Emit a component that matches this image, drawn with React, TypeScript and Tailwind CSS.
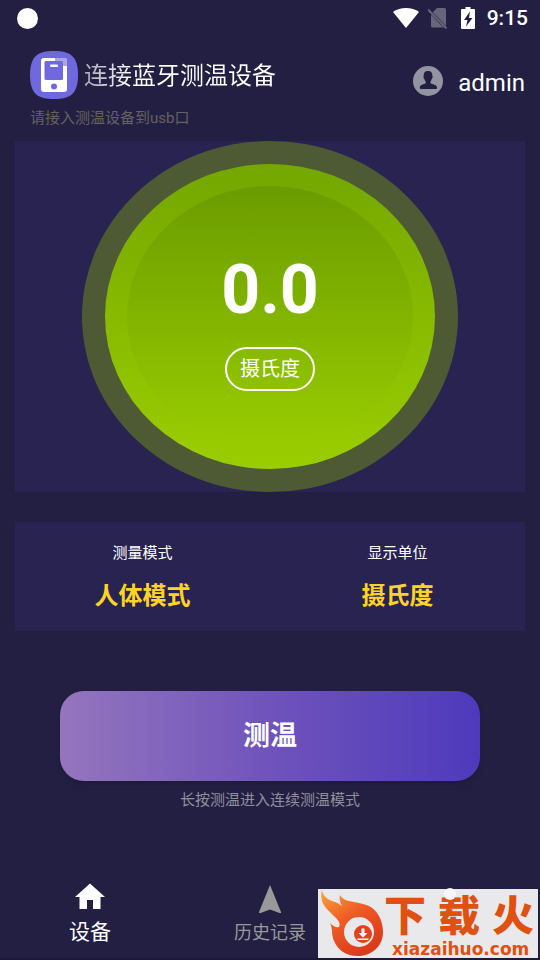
import { useState } from "react";

interface Reading {
    label: string;
    value: string;
}

type TabKey = "device" | "history" | "mine";

const READINGS: Reading[] = [
    { label: "测量模式", value: "人体模式" },
    { label: "显示单位", value: "摄氏度" },
];

function StatusBar() {
    return (
        <div className="flex h-9 items-center justify-between pl-[17px] pr-3">
            <div className="h-[21px] w-[21px] rounded-full bg-white" />
            <div className="flex items-center text-white">
                <svg className="h-5 w-[26px]" viewBox="0 0 26 20" fill="currentColor">
                    <path d="M13 20 0 4C3.500 1.200 8 0 13 0s9.500 1.200 13 4z" />
                </svg>
                <svg className="ml-[9px] h-[22px] w-5" viewBox="0 0 20 22">
                    <path
                        d="M9 1h7.500q1.500 0 1.500 1.500V19q0 1.500-1.500 1.500h-12Q3 20.500 3 19V7z"
                        fill="#67647c"
                    />
                    <path d="M1 3.500 19 22" stroke="#231f42" strokeWidth="3" />
                    <path d="M0 2.500 18.500 21.500" stroke="#67647c" strokeWidth="2" />
                </svg>
                <svg className="ml-[13px] h-[22px] w-[14px]" viewBox="0 0 14 22">
                    <path
                        d="M4.500 0h5v2H13q1 0 1 1v18q0 1-1 1H1q-1 0-1-1V3q0-1 1-1h3.500z"
                        fill="currentColor"
                    />
                    <path d="M9 4.500 3 13h3.500l-1.500 6.500L11.500 11H8z" fill="#231f42" />
                </svg>
                <span className="ml-3 text-[21px] font-medium leading-6">9:15</span>
            </div>
        </div>
    );
}

function DeviceIcon() {
    return (
        <svg className="h-12 w-12 shrink-0" viewBox="0 0 48 48">
            <path
                d="M24 0C40 0 48 5 48 24S40 48 24 48 0 43 0 24 8 0 24 0z"
                fill="#7069de"
            />
            <rect x="11" y="7" width="26" height="34" rx="3" fill="#fff" />
            <path d="M25 7h9q3 0 3 3v5H25z" fill="#a9a5ea" />
            <rect x="14.500" y="10" width="18.500" height="19" rx="1.500" fill="#7069de" />
            <rect x="20" y="13.500" width="8" height="2.500" rx="1" fill="#fff" />
            <circle cx="24" cy="35.500" r="3" fill="#7069de" />
        </svg>
    );
}

function Header() {
    return (
        <header className="flex items-start justify-between px-[15px] pt-[15px]">
            <div className="pl-[15px]">
                <div className="flex items-center gap-1.5">
                    <DeviceIcon />
                    <h1 className="bg-linear-to-r from-[#aaa8b4] from-0% to-white to-25% bg-clip-text pt-0.5 text-2xl text-transparent">
                        连接蓝牙测温设备
                    </h1>
                </div>
                <p className="mt-[7px] text-[15px] leading-6 text-[#65625f]">请接入测温设备到usb口</p>
            </div>
            <button type="button" className="mt-3 flex items-center gap-[15px] text-white">
                <svg className="h-[30px] w-[30px]" viewBox="0 0 30 30">
                    <circle cx="15" cy="15" r="15" fill="#9295a1" />
                    <path
                        d="M15 5c3.200 0 4.500 1.500 4.300 5 .7.300.4 1.900-.4 2.500-.3 1.500-.9 2.300-1.400 2.900v1.900c1.500 1 6.500 1.300 6.500 4.200 0 1-.4 1.500-1 1.500H7.800c-.6 0-1-.5-1-1.500 0-2.900 4.700-3.200 5.900-4.200v-1.900c-.6-.6-1.200-1.400-1.500-2.900-.8-.6-1.100-2.200-.4-2.500C10.600 6.500 11.800 5 15 5z"
                        fill="#231f42"
                    />
                </svg>
                <span className="pt-1 text-2xl">admin</span>
            </button>
        </header>
    );
}

function Gauge() {
    return (
        <section className="flex justify-center bg-[#292351]">
            <div className="rounded-[50%] bg-[#4d5a33] p-[23px]">
                <div className="rounded-[50%] bg-linear-to-b from-[#74a700] to-[#9bce00] p-[22px]">
                    <div className="flex min-h-[261px] w-[286px] flex-col items-center rounded-[50%] bg-linear-to-b from-[#6b9c00] to-[#99cc00] pt-[68px] text-white">
                        <span className="text-[68px] font-bold leading-[72px]">0.0</span>
                        <span className="mt-[21px] rounded-full border-2 border-white px-[13px] py-1.5 text-xl">
                            摄氏度
                        </span>
                    </div>
                </div>
            </div>
        </section>
    );
}

function FlameLogo() {
    return (
        <svg className="h-[69px] w-[66px] shrink-0" viewBox="0 0 66 69">
            <defs>
                <linearGradient id="flame" x1="0" y1="0" x2="0.600" y2="1">
                    <stop offset="0" stopColor="#f9a63c" />
                    <stop offset="0.500" stopColor="#ee5a24" />
                    <stop offset="1" stopColor="#dc3a1b" />
                </linearGradient>
            </defs>
            <path
                d="M4 1c1 6 5 9 10 11 5 2 8 3 10 5-2-4-3-7-2-11 3 5 8 6 14 7 5 1 11 2 15 4 8 4 14 14 14 26 0 14-11 24-25 24-12 0-20-6-24-15-3-7-1-12-4-18 3 3 6 5 9 4 2-4-1-7-5-11C10 21 6 18 4 12 3 8 3 4 4 1z"
                fill="url(#flame)"
            />
            <circle cx="41" cy="43" r="15" fill="#e9e9ec" />
            <circle cx="45" cy="45" r="9" fill="#df431e" />
            <path d="M43.500 39.500h3v4.500h3L45 48.500 40.500 44h3zM39.500 49.500h11v1.500h-11z" fill="#fff" />
        </svg>
    );
}

function SiteBadge() {
    return (
        <a
            href="#download"
            className="absolute bottom-0 right-0.5 flex h-[69px] w-[220px] items-start bg-[#e9e9ec] text-[#e05010]"
        >
            <FlameLogo />
            <span className="flex flex-1 flex-col pt-2">
                <span className="flex justify-between pr-1 text-[42px] font-black leading-10">
                    <span>下</span>
                    <span>载</span>
                    <span>火</span>
                </span>
                <span className="mt-0.5 pl-2 font-['DejaVu_Sans'] text-[17px] font-bold leading-5">
                    xiazaihuo.com
                </span>
            </span>
        </a>
    );
}

function TabBar() {
    const [active, setActive] = useState<TabKey>("device");
    const tint = (key: TabKey) =>
        active === key ? "text-[21px] text-white" : "text-lg text-[#999999]";

    return (
        <nav className="relative mt-auto grid h-[90px] grid-cols-3 border-b-2 border-[#1d1936]">
            <button
                type="button"
                onClick={() => setActive("device")}
                className={`flex flex-col items-center pt-3 leading-7 ${tint("device")}`}
            >
                <svg className="mb-2 h-7 w-[30px]" viewBox="0 0 30 28" fill="currentColor">
                    <path d="M15 1.500 30 15h-4.500v12H18v-9h-6v9H4.500V15H0z" />
                </svg>
                设备
            </button>
            <button
                type="button"
                onClick={() => setActive("history")}
                className={`flex flex-col items-center pt-[15px] leading-7 ${tint("history")}`}
            >
                <svg className="mb-1.5 h-7 w-6" viewBox="0 0 24 28" fill="currentColor">
                    <path d="M12 0 23.200 27.500 22.500 28.400 12 24.500 1.500 28.400.8 27.500z" />
                </svg>
                历史记录
            </button>
            <button
                type="button"
                aria-label="我的"
                onClick={() => setActive("mine")}
                className="flex flex-col items-center pt-[18px]"
            >
                <span className="z-10 h-3 w-3 rounded-full bg-[#f6f6f8]" />
            </button>
            <SiteBadge />
        </nav>
    );
}

function App() {
    return (
        <div className="flex min-h-screen flex-col bg-[#231f42] font-[Roboto,'Noto_Sans_CJK_SC',sans-serif]">
            <StatusBar />
            <Header />
            <main className="px-[15px] pt-[11px]">
                <Gauge />
                <section className="mt-[30px] grid grid-cols-2 bg-[#292351] pb-[17px] pt-[19px]">
                    {READINGS.map((r) => (
                        <div key={r.label} className="flex flex-col items-center">
                            <span className="text-[15px] leading-6 text-white">{r.label}</span>
                            <span className="mt-[13px] text-2xl font-bold leading-9 text-[#ffd426]">
                                {r.value}
                            </span>
                        </div>
                    ))}
                </section>
                <div className="mt-[60px] flex flex-col px-[45px]">
                    <button
                        type="button"
                        className="h-[90px] rounded-3xl bg-linear-to-r from-[#9575bd] via-[#7053bb] to-[#4e39bc] text-[27px] font-bold text-white shadow-md"
                    >
                        测温
                    </button>
                    <p className="mt-[7px] text-center text-[15px] leading-6 text-[#918f9e]">
                        长按测温进入连续测温模式
                    </p>
                </div>
            </main>
            <TabBar />
        </div>
    );
}

export default App;
